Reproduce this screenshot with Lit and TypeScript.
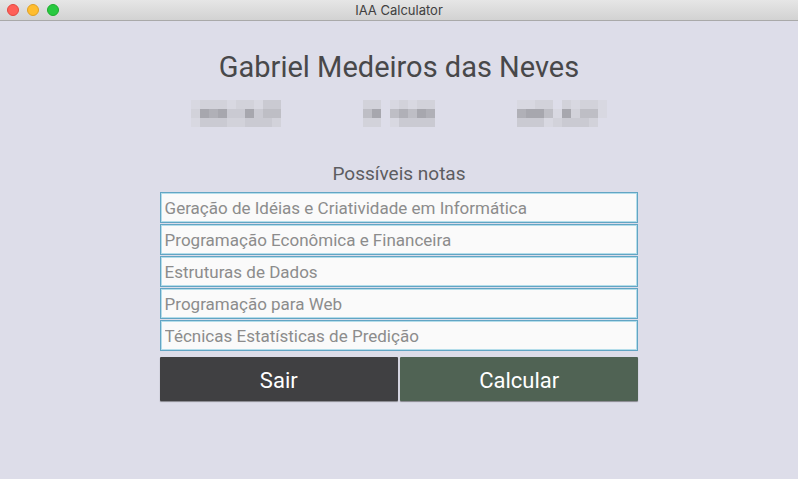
import { LitElement, html, css } from "lit";
import { customElement, property } from "lit/decorators.js";

const SHADES: Record<string, string> = {
  "0": "transparent",
  "1": "#d8d8e1",
  "2": "#d2d2da",
  "3": "#cacad2",
  "4": "#bebec5",
  "5": "#b0b0b7",
  "6": "#a7a7ae",
};

@customElement("masked-value")
class MaskedValue extends LitElement {
  @property() label = "";
  @property({ attribute: false }) rows: string[] = [];

  static styles = css`
    :host { display: block; }
    .mosaic { display: flex; flex-direction: column; }
    .row { display: flex; }
    .cell { width: 9px; height: 9px; }
  `;

  render() {
    return html`<div class="mosaic" role="img" aria-label=${this.label}>
      ${this.rows.map((row) => html`<div class="row">
        ${[...row].map((level) => html`<span class="cell" style="background:${SHADES[level]}"></span>`)}
      </div>`)}
    </div>`;
  }
}

@customElement("app-root")
class AppRoot extends LitElement {
  private maskedFacts = [
    { label: "Dado oculto 1", rows: ["1222122133", "2656336344", "1333223332"] },
    { label: "Dado oculto 2", rows: ["22012122", "46045465", "22013333"] },
    { label: "Dado oculto 3", rows: ["1122021221", "5664162441", "3331233320"] },
  ];

  private subjects = [
    "Geração de Idéias e Criatividade em Informática",
    "Programação Econômica e Financeira",
    "Estruturas de Dados",
    "Programação para Web",
    "Técnicas Estatísticas de Predição",
  ];

  static styles = css`
    :host {
      display: flex;
      flex-direction: column;
      min-height: 100vh;
      background: #dddde9;
      font-family: Roboto, sans-serif;
    }
    .titlebar {
      display: grid;
      grid-template-columns: 1fr auto 1fr;
      align-items: center;
      height: 20px;
      background: linear-gradient(#e6e6e6, #d2d2d2);
      border-bottom: 1px solid #a9a9a9;
    }
    .lights { display: flex; gap: 8px; padding-left: 7px; }
    .light {
      box-sizing: border-box;
      width: 12px;
      height: 12px;
      padding: 0;
      border: 1px solid;
      border-radius: 50%;
    }
    .close { background: #ff5f57; border-color: #e2483f; }
    .minimize { background: #ffbd2e; border-color: #dfa023; }
    .zoom { background: #28c940; border-color: #1dad2c; }
    .title {
      font: 13px/20px Inter, sans-serif;
      color: #404040;
    }
    .content {
      width: 60%;
      margin: 0 auto;
      display: flex;
      flex-direction: column;
    }
    h1 {
      margin: 26px 0 0;
      font-size: 29px;
      line-height: 40px;
      font-weight: 400;
      color: #48484a;
      text-align: center;
      white-space: nowrap;
    }
    .facts {
      display: flex;
      justify-content: space-between;
      margin-top: 13px;
      padding: 0 31px;
    }
    h2 {
      margin: 35px 0 6px;
      font-size: 19px;
      line-height: 24px;
      font-weight: 400;
      color: #5c5c60;
      text-align: center;
    }
    .fields { display: flex; flex-direction: column; gap: 1px; }
    .field {
      box-sizing: border-box;
      width: 100%;
      height: 31px;
      padding: 0 4px;
      border: 1px solid #62a5c4;
      border-radius: 0;
      outline: none;
      background: #fafafa;
      box-shadow: inset 0 0 0 1px #b4ddea;
      font: 17px Roboto, sans-serif;
      color: #434345;
    }
    .field::placeholder { color: #8c8c8c; opacity: 1; }
    .actions {
      display: grid;
      grid-template-columns: 1fr 1fr;
      gap: 2px;
      margin-top: 6px;
    }
    .action {
      height: 44px;
      padding: 2px 0 0;
      border: 0;
      border-radius: 1px;
      font: 22px Roboto, sans-serif;
      color: #fff;
      box-shadow: 0 1px 1px #85858c;
    }
    .exit { background: #404042; }
    .calculate { background: #506354; }
  `;

  render() {
    return html`
      <header class="titlebar">
        <div class="lights">
          <button class="light close" aria-label="Fechar"></button>
          <button class="light minimize" aria-label="Minimizar"></button>
          <button class="light zoom" aria-label="Ampliar"></button>
        </div>
        <span class="title">IAA Calculator</span>
      </header>
      <main class="content">
        <h1>Gabriel Medeiros das Neves</h1>
        <div class="facts">
          ${this.maskedFacts.map((f) => html`<masked-value .label=${f.label} .rows=${f.rows}></masked-value>`)}
        </div>
        <h2>Possíveis notas</h2>
        <form @submit=${(e: Event) => e.preventDefault()}>
          <div class="fields">
            ${this.subjects.map((s) => html`<input class="field" type="text" placeholder=${s} aria-label=${s} />`)}
          </div>
          <div class="actions">
            <button class="action exit" type="button">Sair</button>
            <button class="action calculate" type="submit">Calcular</button>
          </div>
        </form>
      </main>
    `;
  }
}
